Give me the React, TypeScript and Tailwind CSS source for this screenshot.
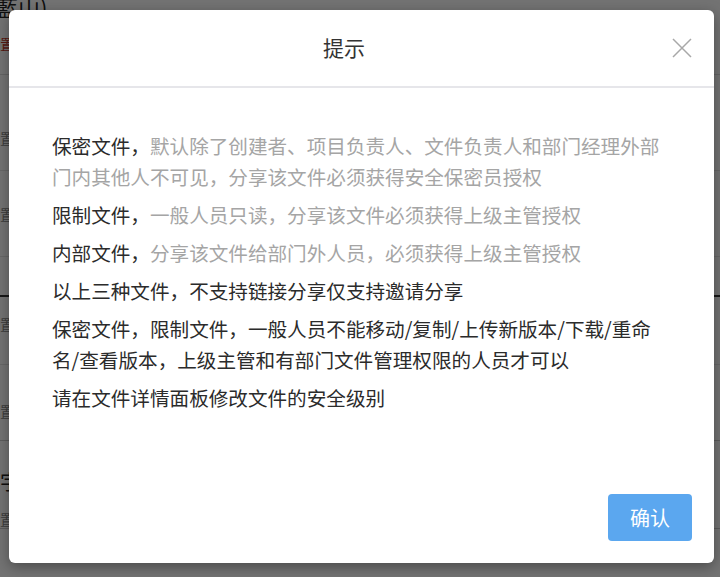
import React from "react";

const font = { fontFamily: '"Noto Sans CJK SC", "Noto Sans", sans-serif' };

export default function App() {
  return (
    <div className="relative w-[720px] h-[577px] overflow-hidden bg-white" style={font}>
      {/* underlying page */}
      <div className="flex flex-col w-full">
        <div className="h-[75px] flex flex-col border-b border-[#ddd]">
          <span className="text-[22px] leading-[20px] text-[#222] -ml-[4px] -mt-[4px]">藍山)</span>
          <span className="mt-[18px] text-[15px] leading-[20px] text-[#c0392b]">置</span>
        </div>
        <div className="h-[96px] flex flex-col justify-end pb-[22px] border-b border-[#e5e5e5]">
          <span className="text-[14px] leading-[20px] text-[#888]">置</span>
        </div>
        <div className="h-[86px] flex flex-col justify-center border-b border-[#e5e5e5]">
          <span className="text-[14px] leading-[20px] text-[#888]">置</span>
        </div>
        <div className="h-[40px] border-b-2 border-[#333]" />
        <div className="h-[68px] flex flex-col justify-start pt-[17px] border-b border-[#e5e5e5]">
          <span className="text-[14px] leading-[20px] text-[#888]">置</span>
        </div>
        <div className="h-[76px] flex flex-col justify-start pt-[36px] border-b border-[#ccc]">
          <span className="text-[14px] leading-[20px] text-[#888]">置</span>
        </div>
        <div className="h-[88px] flex flex-col pt-[28px] border-b border-[#ccc]">
          <span className="text-[20px] leading-[26px] text-[#222]">字</span>
          <span className="mt-[14px] text-[14px] leading-[20px] text-[#888]">置</span>
        </div>
      </div>

      {/* overlay */}
      <div className="absolute inset-0 bg-black/55" />

      {/* modal */}
      <div className="absolute left-[9px] top-[10px] w-[705px] h-[553px] rounded-[6px] bg-white shadow-[0_4px_14px_rgba(0,0,0,0.35)] flex flex-col">
        <div className="h-[78px] flex items-center border-b-2 border-[#e6e6ea] pl-[7px] pr-[22px]">
          <div className="flex-1 text-center text-[21px] text-[#333]">提示</div>
          <svg width="20" height="20" viewBox="0 0 20 20" className="shrink-0">
            <path d="M1 1L19 19M19 1L1 19" stroke="#a8a8a8" strokeWidth="1.5" />
          </svg>
        </div>
        <div className="flex-1 flex flex-col pl-[43px] pt-[42px]">
          <div className="w-[620px] text-[19.6px] leading-[31px] text-[#2b2b2b] flex flex-col gap-[7px]">
            <p>
              保密文件，<span className="text-[#a5a5a5]">默认除了创建者、项目负责人、文件负责人和部门经理外部门内其他人不可见，分享该文件必须获得安全保密员授权</span>
            </p>
            <p>
              限制文件，<span className="text-[#a5a5a5]">一般人员只读，分享该文件必须获得上级主管授权</span>
            </p>
            <p>
              内部文件，<span className="text-[#a5a5a5]">分享该文件给部门外人员，必须获得上级主管授权</span>
            </p>
            <p>以上三种文件，不支持链接分享仅支持邀请分享</p>
            <p>保密文件，限制文件，一般人员不能移动/复制/上传新版本/下载/重命名/查看版本，上级主管和有部门文件管理权限的人员才可以</p>
            <p>请在文件详情面板修改文件的安全级别</p>
          </div>
        </div>
        <div className="flex justify-end pr-[22px] pb-[22px]">
          <button className="w-[84px] h-[47px] rounded-[4px] bg-[#5ba7ef] text-white text-[20px]">确认</button>
        </div>
      </div>
    </div>
  );
}
